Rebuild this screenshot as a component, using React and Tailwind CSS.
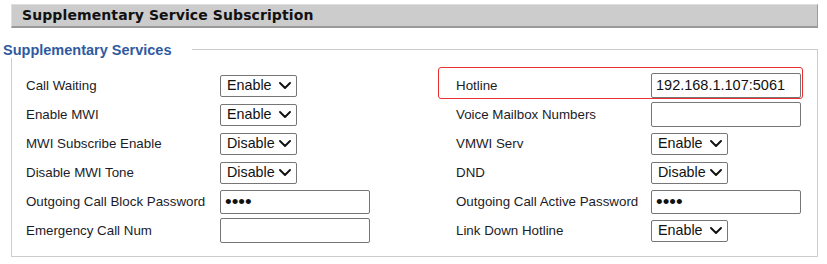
import React from "react";

const leftRows = [
  { label: "Call Waiting", type: "select", value: "Enable" },
  { label: "Enable MWI", type: "select", value: "Enable" },
  { label: "MWI Subscribe Enable", type: "select", value: "Disable" },
  { label: "Disable MWI Tone", type: "select", value: "Disable" },
  { label: "Outgoing Call Block Password", type: "password" },
  { label: "Emergency Call Num", type: "text", value: "" },
];

const rightRows = [
  { label: "Hotline", type: "text", value: "192.168.1.107:5061", marked: true },
  { label: "Voice Mailbox Numbers", type: "text", value: "" },
  { label: "VMWI Serv", type: "select", value: "Enable" },
  { label: "DND", type: "select", value: "Disable" },
  { label: "Outgoing Call Active Password", type: "password" },
  { label: "Link Down Hotline", type: "select", value: "Enable" },
];

function Chevron() {
  return (
    <svg width="12" height="7" viewBox="0 0 12 7" className="shrink-0">
      <polyline
        points="1,1 6,6 11,1"
        fill="none"
        stroke="#111"
        strokeWidth="1.9"
        strokeLinecap="round"
        strokeLinejoin="round"
      />
    </svg>
  );
}

function Control({ row }) {
  if (row.type === "select") {
    return (
      <div className="flex h-[22px] w-[77px] items-center justify-between rounded-[2px] border border-[#767676] bg-white pl-[6px] pr-[5px] text-[14.3px] text-[#111]">
        <span>{row.value}</span>
        <Chevron />
      </div>
    );
  }
  if (row.type === "password") {
    return (
      <div className="flex h-[24px] w-[150px] items-center rounded-[2px] border border-[#767676] bg-white px-[4px]">
        <span className="text-[19px] leading-none text-[#111]">••••</span>
      </div>
    );
  }
  return (
    <div className="flex h-[25px] w-[150px] items-center rounded-[2px] border border-[#767676] bg-white px-[4px] text-[14.5px] text-[#111]">
      {row.value}
    </div>
  );
}

function Row({ row, labelWidth }) {
  return (
    <div className="relative flex h-[29px] items-center">
      {row.marked && (
        <span className="pointer-events-none absolute left-[-18px] top-[-4px] h-[32px] w-[365px] rounded-[3px] border border-[#e8312f]" />
      )}
      <div className={`${labelWidth} shrink-0 text-[13.33px] text-[#1c1c28]`}>{row.label}</div>
      <Control row={row} />
    </div>
  );
}

export default function App() {
  return (
    <div className="h-[264px] w-[827px] bg-white pt-[4px] font-['Liberation_Sans',Arial,sans-serif]">
      <div className="ml-[11px] flex h-[24px] w-[807px] items-center border border-b-2 border-l-[#dedede] border-t-[#dedede] border-r-[#9a9a9a] border-b-[#9a9a9a] bg-[#cccccc] pl-[10px]">
        <span className="font-['DejaVu_Sans',Verdana,sans-serif] text-[14px] font-bold tracking-[0.1px] text-[#111]">
          Supplementary Service Subscription
        </span>
      </div>

      <div className="mt-[13px] w-[818px]">
        <div className="flex h-[17px]">
          <div className="ml-[3px] pt-[1px] text-[14.5px] font-bold leading-[17px] text-[#2f5a9f]">
            Supplementary Services
          </div>
          <div className="ml-[21px] mt-[8px] flex-1 border-r border-t border-[#cccccc]" />
        </div>
        <div className="ml-[11px] flex w-[807px] border-b border-l border-r border-[#cccccc] pb-[11px] pt-[13px]">
          <div className="w-[426px] pl-[14px]">
            {leftRows.map((row) => (
              <Row key={row.label} row={row} labelWidth="w-[194px]" />
            ))}
          </div>
          <div className="pl-[18px]">
            {rightRows.map((row) => (
              <Row key={row.label} row={row} labelWidth="w-[195px]" />
            ))}
          </div>
        </div>
      </div>
    </div>
  );
}
